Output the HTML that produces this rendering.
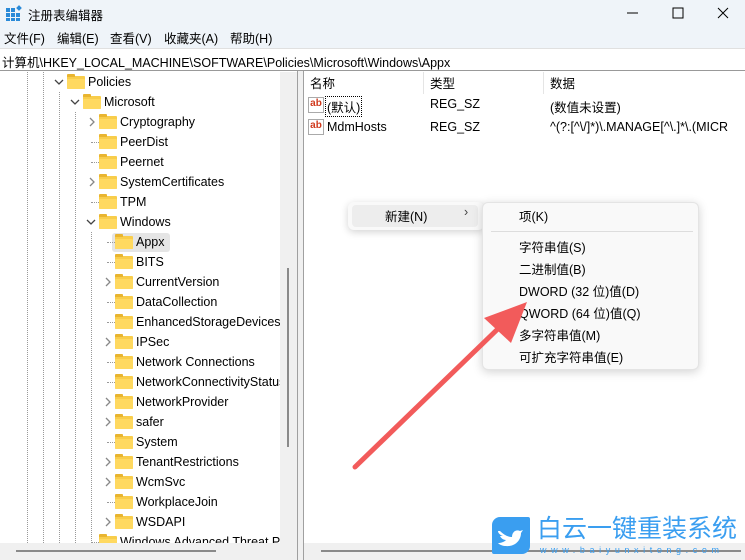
<!DOCTYPE html>
<html><head><meta charset="utf-8"><style>
*{margin:0;padding:0;box-sizing:border-box}
body{width:745px;height:560px;overflow:hidden;background:#fff;font-family:"Liberation Sans","Noto Sans CJK SC",sans-serif;font-size:12.5px;color:#000;position:relative}
.abs{position:absolute}
.title{left:0;top:0;width:745px;height:26px;background:#eff4f9}
.menu{left:0;top:26px;width:745px;height:22px;background:#eff4f9}
.menu span{position:absolute;top:2px}
.addr{left:0;top:48px;width:745px;height:23px;background:#fff;border-bottom:1px solid #999;border-top:1px solid #e0e0e0}
.row{position:absolute;height:20px;line-height:20px;white-space:nowrap}
.fold{position:absolute;width:18px;height:13px;top:4px;background:#f8cd4b;border-radius:1px}
.fold:before{content:"";position:absolute;left:0;top:-2px;width:8px;height:3px;background:#e9b530;border-radius:1px 1px 0 0}
.fold:after{content:"";position:absolute;left:0;top:3px;width:18px;height:10px;background:#ffd960;border-radius:1px}
.vl{position:absolute;border-left:1px dotted #999}
.hl{position:absolute;border-top:1px dotted #999;width:8px}
.menu1{left:348px;top:202px;width:136px;height:28px;background:#f9f9f9;border-radius:6px;box-shadow:0 2px 8px rgba(0,0,0,.18)}
.menu2{left:482px;top:202px;width:217px;height:168px;background:#f9f9f9;border-radius:6px;border:1px solid #e4e4e4;box-shadow:0 2px 10px rgba(0,0,0,.18)}
.mi{position:absolute;left:36px;font-size:12.5px}
</style></head><body>
<div class="abs title">
<svg class="abs" style="left:6px;top:5px" width="16" height="16"><rect x="0" y="3" width="4" height="4" fill="#2a8ad8"/><rect x="5" y="3" width="4" height="4" fill="#2a8ad8"/><rect x="0" y="8" width="4" height="4" fill="#2a8ad8"/><rect x="5" y="8" width="4" height="4" fill="#2a8ad8"/><rect x="10" y="8" width="4" height="4" fill="#2a8ad8"/><rect x="0" y="13" width="4" height="3" fill="#2a8ad8"/><rect x="5" y="13" width="4" height="3" fill="#2a8ad8"/><rect x="10" y="13" width="4" height="3" fill="#2a8ad8"/><rect x="11" y="1" width="4" height="4" fill="#2a8ad8" transform="rotate(45 13 3)"/></svg>
<span class="abs" style="left:28px;top:5px;font-size:12.5px">注册表编辑器</span>
<svg class="abs" style="left:620px;top:5px" width="120" height="16"><line x1="7" y1="8" x2="18" y2="8" stroke="#000"/><rect x="53" y="3" width="10" height="10" fill="none" stroke="#000"/><path d="M113 3l10 10M123 3l-10 10" stroke="#000" transform="translate(-15 0)"/></svg>
</div>
<div class="abs menu"><span style="left:4px">文件(F)</span><span style="left:57px">编辑(E)</span><span style="left:110px">查看(V)</span><span style="left:164px">收藏夹(A)</span><span style="left:230px">帮助(H)</span></div>
<div class="abs addr"><span class="abs" style="left:2px;top:3px">计算机\HKEY_LOCAL_MACHINE\SOFTWARE\Policies\Microsoft\Windows\Appx</span></div>

<div class="abs" style="left:0;top:72px;width:280px;height:471px;background:#fff;overflow:hidden">
<div class="vl" style="left:27px;top:0;height:471px"></div>
<div class="vl" style="left:43px;top:0;height:471px"></div>
<div class="vl" style="left:59px;top:20px;height:451px"></div>
<div class="vl" style="left:75px;top:40px;height:431px"></div>
<div class="vl" style="left:91px;top:160px;height:311px"></div>
</div>
<div id="tree" class="abs" style="left:0;top:0;width:280px;height:543px;overflow:hidden"></div>
<div class="abs" style="left:280px;top:72px;width:17px;height:471px;background:#f0f0f0"></div>
<div class="abs" style="left:287px;top:268px;width:2px;height:179px;background:#8a8a8a"></div>
<div class="abs" style="left:0;top:543px;width:297px;height:17px;background:#f0f0f0"></div>
<div class="abs" style="left:16px;top:550px;width:200px;height:2px;background:#8a8a8a"></div>
<div class="abs" style="left:297px;top:71px;width:7px;height:489px;background:#f0f0f0;border-left:1px solid #a0a0a0;border-right:1px solid #a0a0a0"></div>
<div class="abs" style="left:304px;top:543px;width:441px;height:17px;background:#f0f0f0"></div>
<div class="abs" style="left:321px;top:550px;width:420px;height:2px;background:#8a8a8a"></div>

<span class="abs" style="left:310px;top:73px">名称</span>
<div class="abs" style="left:423px;top:72px;height:22px;border-left:1px solid #e5e5e5"></div>
<span class="abs" style="left:430px;top:73px">类型</span>
<div class="abs" style="left:543px;top:72px;height:22px;border-left:1px solid #e5e5e5"></div>
<span class="abs" style="left:550px;top:73px">数据</span>
<div class="abs" style="left:308px;top:97px;width:16px;height:16px;border:1px solid #aaa;background:#fff;color:#d0391c;font-weight:bold;font-size:10px;line-height:12px;text-align:center">ab</div>
<span class="abs" style="left:325px;top:96px;border:1px dotted #000;padding:0 1px">(默认)</span>
<span class="abs" style="left:430px;top:97px">REG_SZ</span>
<span class="abs" style="left:550px;top:97px">(数值未设置)</span>
<div class="abs" style="left:308px;top:119px;width:16px;height:16px;border:1px solid #aaa;background:#fff;color:#d0391c;font-weight:bold;font-size:10px;line-height:12px;text-align:center">ab</div>
<span class="abs" style="left:327px;top:120px">MdmHosts</span>
<span class="abs" style="left:430px;top:120px">REG_SZ</span>
<span class="abs" style="left:550px;top:120px;white-space:nowrap">^(?:[^\/]*)\.MANAGE[^\.]*\.(MICR</span>

<div class="abs menu1"><div class="abs" style="left:4px;top:3px;width:126px;height:22px;background:#ededed;border-radius:4px"></div><span class="abs" style="left:37px;top:4px">新建(N)</span><span class="abs" style="left:116px;top:3px;color:#444">›</span></div>
<div class="abs menu2">
<span class="mi" style="top:3px">项(K)</span>
<div class="abs" style="left:8px;top:28px;width:202px;border-top:1px solid #ddd"></div>
<span class="mi" style="top:34px">字符串值(S)</span>
<span class="mi" style="top:56px">二进制值(B)</span>
<span class="mi" style="top:78px">DWORD (32 位)值(D)</span>
<span class="mi" style="top:100px">QWORD (64 位)值(Q)</span>
<span class="mi" style="top:122px">多字符串值(M)</span>
<span class="mi" style="top:144px">可扩充字符串值(E)</span>
</div>
<svg class="abs" style="left:0;top:0" width="745" height="560"><line x1="355" y1="467" x2="505" y2="322" stroke="#f25b5b" stroke-width="5" stroke-linecap="round"/><polygon points="527,302 484,318 511,343" fill="#f25b5b"/></svg>

<div class="abs" style="left:492px;top:517px;width:38px;height:37px;background:#3a9ef0;border-radius:8px 2px 8px 2px"></div>
<svg class="abs" style="left:497px;top:523px" width="28" height="26"><path d="M3 8c4 4 8 6 12 6 0-5 4-8 8-6l3-1-2 3c0 8-7 14-15 13-3 0-6-1-8-3 3 0 6-1 8-3-3 0-5-2-6-4h3c-3-1-5-3-5-5z" fill="#fff"/></svg>
<span class="abs" style="left:537px;top:514px;font-size:25px;line-height:30px;color:#3a9ef0;white-space:nowrap">白云一键重装系统</span>
<span class="abs" style="left:540px;top:545px;font-size:9px;color:#3a9ef0;letter-spacing:4.6px;white-space:nowrap">www.baiyunxitong.com</span>

<script>
var rows=[[1,'v','Policies'],[2,'v','Microsoft'],[3,'>','Cryptography'],[3,'','PeerDist'],[3,'','Peernet'],[3,'>','SystemCertificates'],[3,'','TPM'],[3,'v','Windows'],[4,'','Appx'],[4,'','BITS'],[4,'>','CurrentVersion'],[4,'','DataCollection'],[4,'','EnhancedStorageDevices'],[4,'>','IPSec'],[4,'','Network Connections'],[4,'','NetworkConnectivityStatusIndicator'],[4,'>','NetworkProvider'],[4,'>','safer'],[4,'','System'],[4,'>','TenantRestrictions'],[4,'>','WcmSvc'],[4,'','WorkplaceJoin'],[4,'>','WSDAPI'],[3,'','Windows Advanced Threat Protection']];
var h='';
rows.forEach(function(r,i){var y=72+i*20;var L=r[0];var cx=58+(L-1)*16,fx=67+(L-1)*16,tx=88+(L-1)*16;
if(r[2]=='Appx')h+='<div class="abs" style="left:112px;top:'+(y+1)+'px;width:58px;height:19px;background:#e5e5e5;border-radius:3px"></div>';
if(r[1]=='')h+='<div class="hl" style="left:'+(cx+1)+'px;top:'+(y+10)+'px"></div>';
else if(r[1]=='v')h+='<svg class="abs" style="left:'+(cx-4)+'px;top:'+(y+6)+'px" width="10" height="8"><path d="M1 2l4 4 4-4" fill="none" stroke="#444" stroke-width="1.3"/></svg>';
else h+='<svg class="abs" style="left:'+(cx-2)+'px;top:'+(y+5)+'px" width="8" height="10"><path d="M2 1l4 4-4 4" fill="none" stroke="#888" stroke-width="1.3"/></svg>';
h+='<div class="fold" style="left:'+fx+'px;top:'+(y+4)+'px"></div>';
h+='<div class="row" style="left:'+tx+'px;top:'+y+'px">'+r[2]+'</div>';});
document.getElementById('tree').innerHTML=h;
</script>
</body></html>
